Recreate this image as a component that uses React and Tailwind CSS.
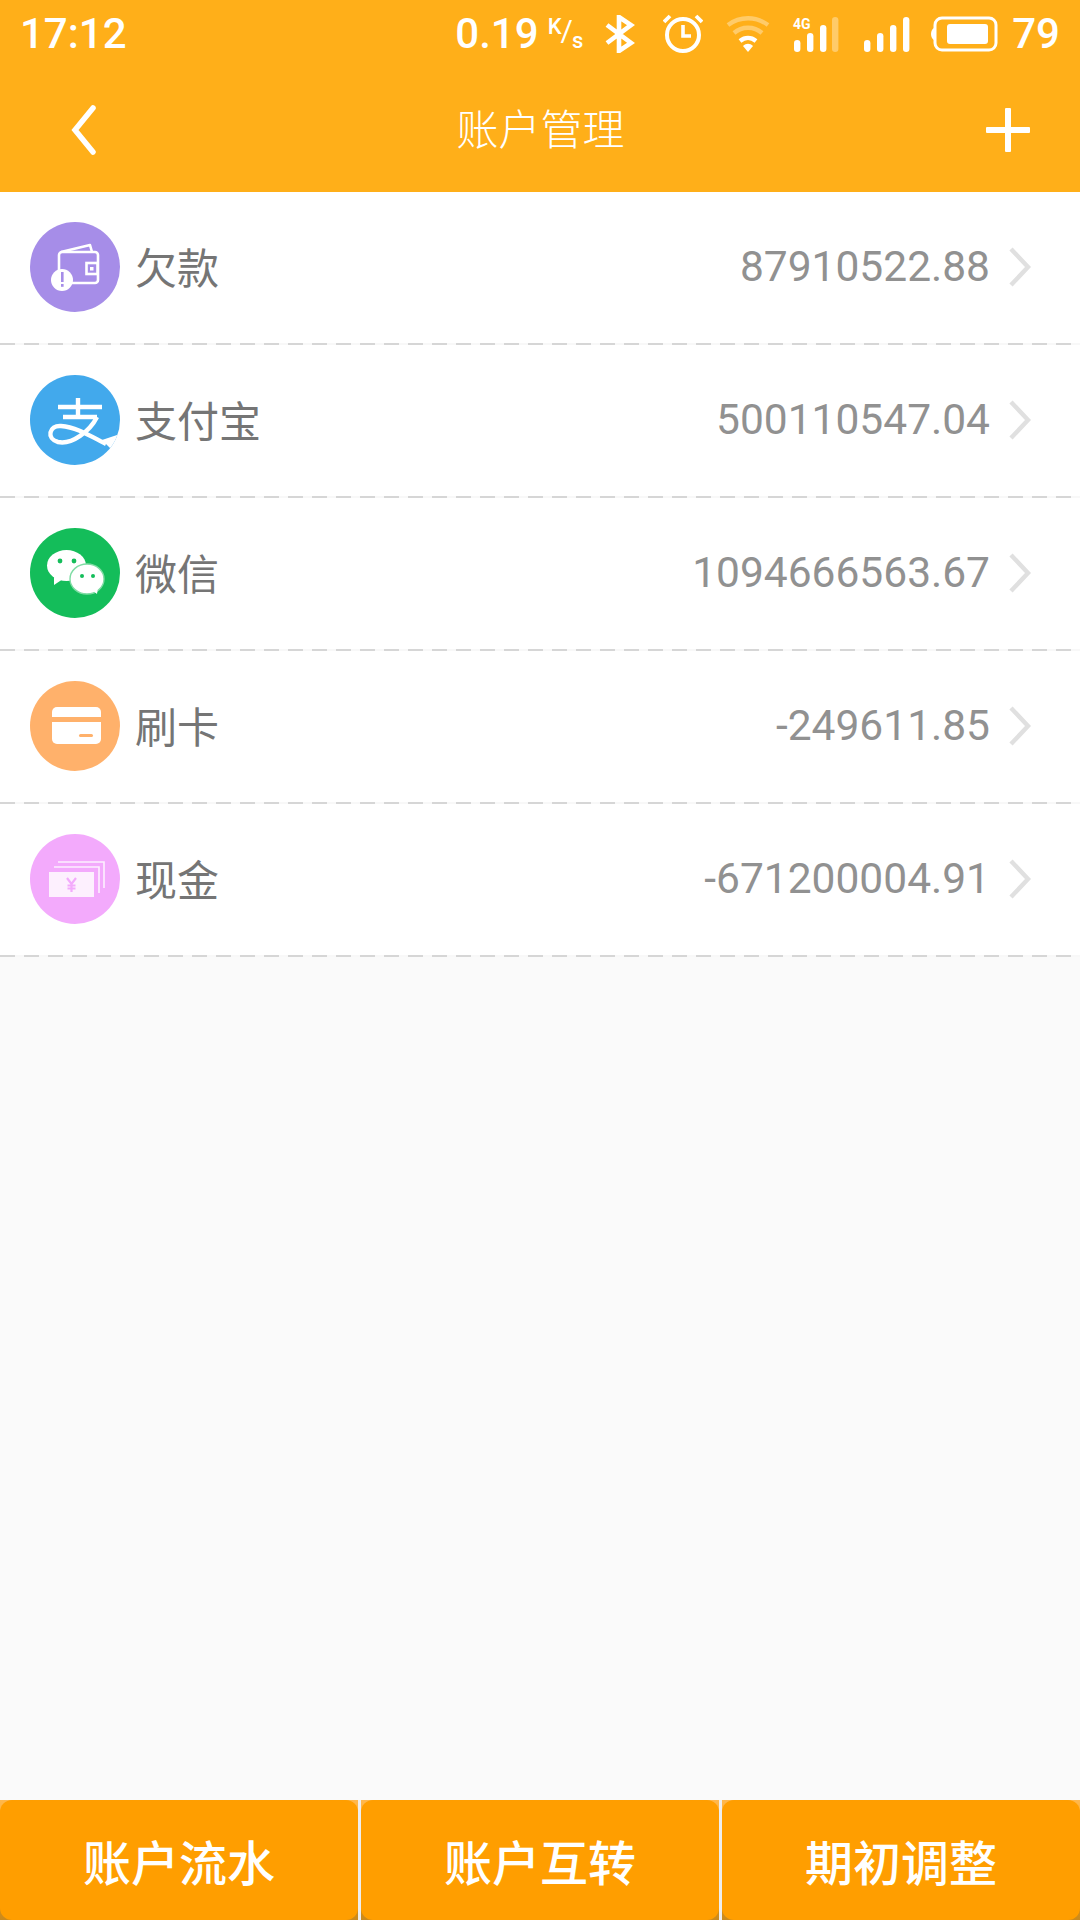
const CJK = "font-['Noto_Sans_CJK_SC','Noto_Sans',sans-serif]";

const accounts = [
  { name: "欠款", amount: "87910522.88", bg: "bg-[#a68de8]", icon: <WalletIcon /> },
  { name: "支付宝", amount: "500110547.04", bg: "bg-[#42a9ec]", icon: <AlipayIcon /> },
  { name: "微信", amount: "1094666563.67", bg: "bg-[#14bd5a]", icon: <WechatIcon /> },
  { name: "刷卡", amount: "-249611.85", bg: "bg-[#ffb16b]", icon: <CardIcon /> },
  { name: "现金", amount: "-671200004.91", bg: "bg-[#f3aafc]", icon: <CashIcon /> },
];

function WalletIcon() {
  return (
    <svg viewBox="0 0 90 90" className="w-full h-full">
      <path d="M31 30 L60 23 L62 30" fill="none" stroke="white" strokeWidth="2.6" strokeLinejoin="round" />
      <path d="M32 30 H65 a3 3 0 0 1 3 3 V58 a3 3 0 0 1 -3 3 H34 M29 48 V33 a3 3 0 0 1 3 -3" fill="none" stroke="white" strokeWidth="2.6" />
      <rect x="56.5" y="41" width="11" height="11" fill="#a68de8" stroke="white" strokeWidth="2.6" />
      <rect x="60" y="45" width="3.5" height="3.5" fill="white" />
      <circle cx="32" cy="58" r="11" fill="white" />
      <rect x="31" y="50" width="2.6" height="10" fill="#a68de8" />
      <rect x="31" y="62" width="2.6" height="2.8" fill="#a68de8" />
    </svg>
  );
}

function AlipayIcon() {
  return (
    <svg viewBox="0 0 90 90" className="w-full h-full">
      <g fill="none" stroke="white" strokeWidth="4.4">
        <path d="M28 32 H72" />
        <path d="M48 23 V42" />
        <path d="M33 42 H67" />
        <path d="M67 42 C60 56 42 70 28 67 C16 64 19 50 31 51 C47 52 62 62 76 69" />
      </g>
      <path d="M72 65 L90 59 L90 67 L81 74 Z" fill="white" />
    </svg>
  );
}

function WechatIcon() {
  return (
    <svg viewBox="0 0 90 90" className="w-full h-full">
      <ellipse cx="36.5" cy="37.5" rx="19.5" ry="15.5" fill="white" />
      <path d="M24 49 L24 57 L33 51 Z" fill="white" />
      <circle cx="30" cy="33" r="2.4" fill="#14bd5a" />
      <circle cx="44" cy="33" r="2.4" fill="#14bd5a" />
      <ellipse cx="57" cy="51" rx="17" ry="15" fill="white" stroke="#7fdca4" strokeWidth="1.4" />
      <path d="M62 62 L67 66 L68 59 Z" fill="white" />
      <circle cx="52" cy="48" r="2" fill="#14bd5a" />
      <circle cx="63" cy="48" r="2" fill="#14bd5a" />
    </svg>
  );
}

function CardIcon() {
  return (
    <svg viewBox="0 0 90 90" className="w-full h-full">
      <rect x="22" y="26" width="49" height="37" rx="5" fill="white" />
      <rect x="22" y="36" width="49" height="5" fill="#ffb16b" />
      <rect x="49" y="53" width="14" height="3" rx="1.5" fill="#ffb16b" />
    </svg>
  );
}

function CashIcon() {
  return (
    <svg viewBox="0 0 90 90" className="w-full h-full">
      <path d="M24 33 H69 V59" fill="none" stroke="#fdf0fe" strokeWidth="1.6" />
      <path d="M28 28 H74 V54" fill="none" stroke="#fdf0fe" strokeWidth="1.6" />
      <rect x="19" y="38" width="45" height="25" fill="#fdf0fe" />
      <path d="M37 44 L41.5 50 L46 44 M41.5 50 V58 M37.5 51.5 H45.5 M37.5 54.5 H45.5" fill="none" stroke="#f3aafc" strokeWidth="2.2" />
    </svg>
  );
}

function StatusIcons() {
  return (
    <>
      <svg viewBox="0 0 30 38" className="w-[30px] h-[38px] ml-[22px]" fill="none" stroke="white" strokeWidth="4.6">
        <path d="M2 10 L26 28 L14 36 V2 L26 10 L2 28" />
      </svg>
      <svg viewBox="0 0 40 40" className="w-[40px] h-[40px] ml-[28px]" fill="none" stroke="white">
        <circle cx="20" cy="21" r="16" strokeWidth="4" />
        <path d="M20 11 V22 H28" strokeWidth="3.6" />
        <path d="M1 8 L7 2 M39 8 L33 2" strokeWidth="3.8" />
      </svg>
      <svg viewBox="0 0 44 38" className="w-[44px] h-[38px] ml-[23px]" fill="none" stroke="white" strokeWidth="4.4">
        <path d="M2 10 C14 1 30 1 42 10" opacity="0.35" />
        <path d="M8 18 C16 11 28 11 36 18" opacity="0.35" />
        <path d="M14 26 C19 22 25 22 30 26" />
        <path d="M17 31 L22 37 L27 31 C24 28 20 28 17 31 Z" fill="white" stroke="none" />
      </svg>
      <svg viewBox="0 0 46 36" className="w-[46px] h-[36px] ml-[23px] overflow-visible" fill="white">
        <text x="0" y="13" fontSize="14" fontWeight="700" fontFamily="Roboto, sans-serif">4G</text>
        <rect x="1" y="24" width="6.4" height="12" rx="3.2" />
        <rect x="14" y="17" width="6.4" height="19" rx="3.2" />
        <rect x="27" y="9" width="6.4" height="27" rx="3.2" />
        <rect x="39" y="1" width="6.4" height="35" rx="3.2" opacity="0.35" />
      </svg>
      <svg viewBox="0 0 47 36" className="w-[47px] h-[36px] ml-[24px]" fill="white">
        <rect x="1" y="24" width="6.4" height="12" rx="3.2" />
        <rect x="14" y="17" width="6.4" height="19" rx="3.2" />
        <rect x="27" y="9" width="6.4" height="27" rx="3.2" />
        <rect x="40" y="1" width="6.4" height="35" rx="3.2" />
      </svg>
      <svg viewBox="0 0 68 36" className="w-[68px] h-[36px] ml-[20px]" fill="none">
        <rect x="5" y="2" width="61" height="32" rx="7" stroke="white" strokeWidth="3" />
        <rect x="17" y="8" width="41" height="20" rx="3" fill="white" />
        <path d="M4 12 C0 14 0 22 4 24 Z" fill="white" />
      </svg>
    </>
  );
}

export default function App() {
  return (
    <div className={`w-[1080px] h-[1920px] flex flex-col bg-[#fafafa] ${CJK}`}>
      <header className="h-[192px] bg-[#ffaf19] text-white shrink-0">
        <div className="h-[68px] pb-[1px] flex items-center pl-[20px] pr-[20px] font-['Roboto',sans-serif] font-medium text-[42px]">
          <span>17:12</span>
          <div className="ml-auto flex items-center">
            <span>0.19</span>
            <span className="ml-[9px] leading-none flex items-start h-[36px] font-medium">
              <span className="text-[22px]">K</span>
              <span className="text-[30px] font-normal -mx-[1px]">/</span>
              <span className="text-[22px] mt-[14px]">s</span>
            </span>
            <StatusIcons />
            <span className="ml-[14px]">79</span>
          </div>
        </div>
        <div className="h-[124px] flex items-center justify-between pl-[68px] pr-[50px]">
          <svg viewBox="0 0 30 50" className="w-[30px] h-[50px]" fill="none" stroke="white" strokeWidth="5.5" strokeLinecap="round">
            <path d="M25 3 L7 25 L25 47" />
          </svg>
          <h1 className="text-[42px] font-light -ml-[3px] mb-[8px]">账户管理</h1>
          <svg viewBox="0 0 44 44" className="w-[44px] h-[44px]" fill="white">
            <rect x="19" y="0" width="6" height="44" rx="1" />
            <rect x="0" y="19" width="44" height="6" rx="1" />
          </svg>
        </div>
      </header>

      <main className="flex-1">
        {accounts.map((a) => (
          <div key={a.name} className="h-[153px] bg-white flex flex-col">
            <div className="flex-1 flex items-center pl-[30px] pr-[48px] pb-[1px]">
              <div className={`w-[90px] h-[90px] rounded-full overflow-hidden ${a.bg}`}>{a.icon}</div>
              <span className="ml-[15px] mb-[3px] text-[42px] text-[#757575]">{a.name}</span>
              <span className="ml-auto text-[42.5px] text-[#919191] font-['Roboto',sans-serif]">{a.amount}</span>
              <svg viewBox="0 0 24 40" className="w-[24px] h-[40px] ml-[18px]" fill="none" stroke="#e0e0e0" strokeWidth="4.4">
                <path d="M3 2 L20 20 L3 38" />
              </svg>
            </div>
            <div className="h-[2px] bg-[repeating-linear-gradient(90deg,#d6d6d6_0,#d6d6d6_15px,#f8f8f8_15px,#f8f8f8_24px)]" />
          </div>
        ))}
      </main>

      <footer className="h-[120px] flex justify-between bg-[#eeeeee] shrink-0">
        {["账户流水", "账户互转", "期初调整"].map((label) => (
          <div key={label} className="w-[358px] bg-[linear-gradient(#ffb84d,#ff9e00_50%,#c98a1e)]">
            <button className="w-full h-full rounded-[12px] bg-[#ff9e00] text-white text-[48px] font-medium">
              {label}
            </button>
          </div>
        ))}
      </footer>
    </div>
  );
}
